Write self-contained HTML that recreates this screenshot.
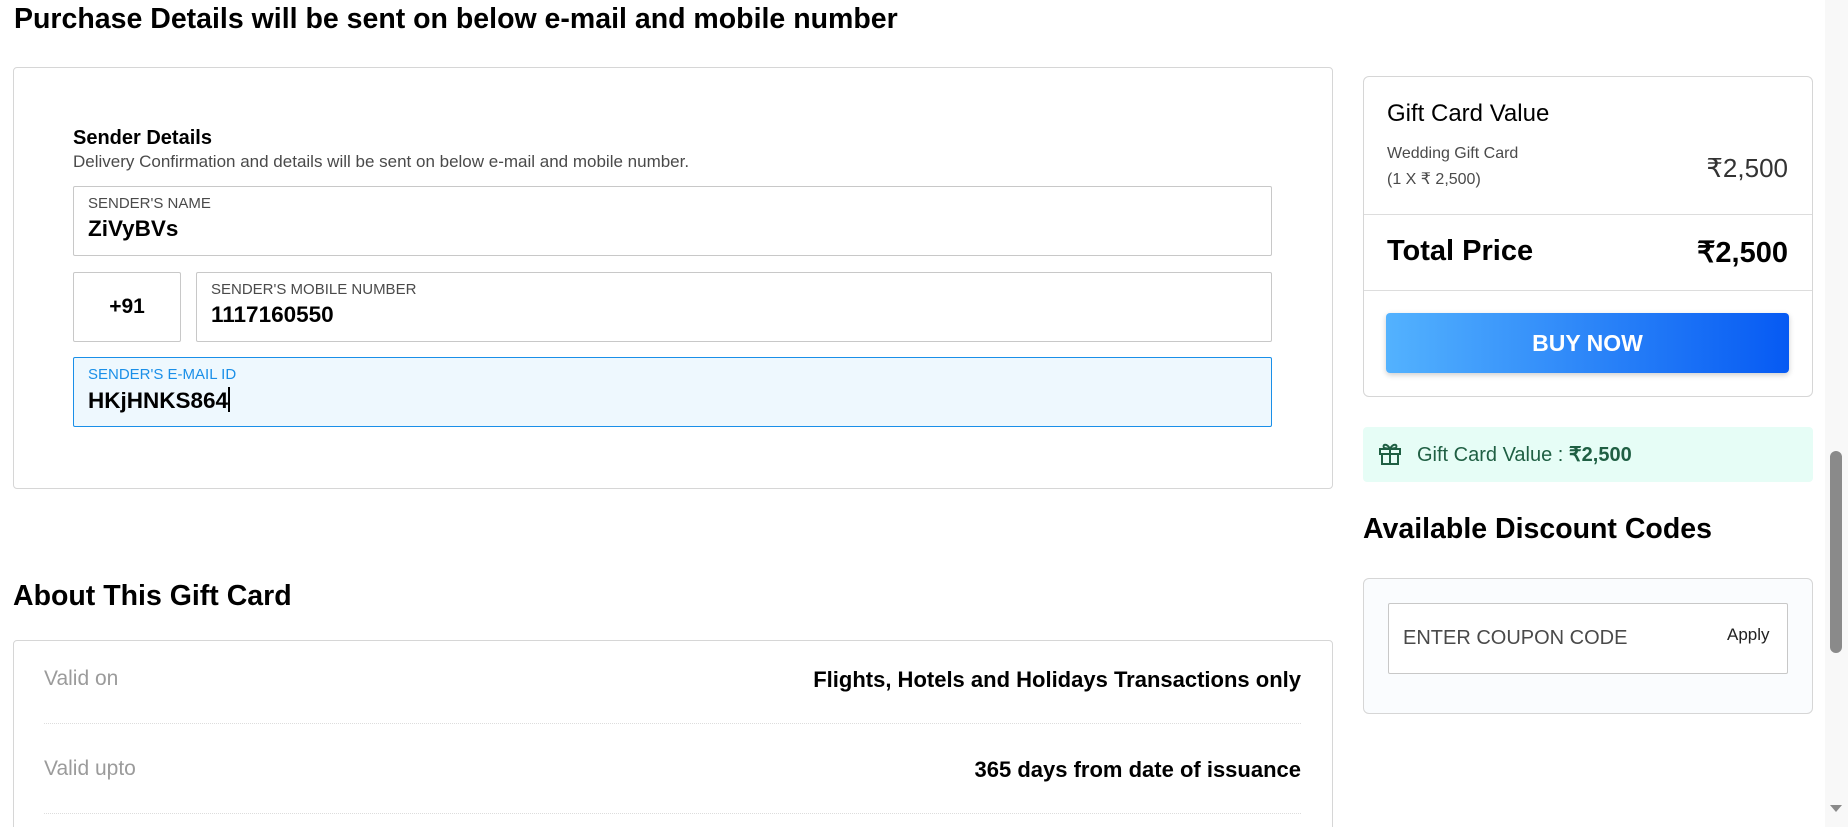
<!DOCTYPE html>
<html style="width:1848px;height:827px;overflow:hidden"><head><meta charset="utf-8"><style>
*{box-sizing:border-box;margin:0;padding:0}
body{width:1848px;height:827px;overflow:hidden;background:#fff;font-family:"Liberation Sans",sans-serif;position:relative;color:#000}
.a{position:absolute;white-space:nowrap}
.box{position:absolute;border:1px solid #d6d6d6;border-radius:4px;background:#fff}
.lbl{position:absolute;left:14px;top:8px;font-size:15px;color:#4a4a4a}
.val{position:absolute;left:14px;top:29px;font-size:22.5px;font-weight:bold;font-family:"Liberation Sans",Arial,sans-serif}
</style></head><body>
<div class="a" style="left:14px;top:3px;font-size:28.5px;font-weight:bold">Purchase Details will be sent on below e-mail and mobile number</div>

<div class="box" style="left:13px;top:67px;width:1320px;height:422px;border-radius:4px"></div>
<div class="a" style="left:73px;top:127px;font-size:20px;font-weight:bold">Sender Details</div>
<div class="a" style="left:73px;top:152px;font-size:17px;color:#4a4a4a">Delivery Confirmation and details will be sent on below e-mail and mobile number.</div>

<div class="box" style="left:73px;top:186px;width:1199px;height:70px;border-color:#c8c8c8;border-radius:2px"><div class="lbl">SENDER'S NAME</div><div class="val">ZiVyBVs</div></div>
<div class="box" style="left:73px;top:272px;width:108px;height:70px;border-color:#c8c8c8;border-radius:2px"><div class="a" style="left:0;width:106px;text-align:center;top:22px;font-size:21px;font-weight:bold">+91</div></div>
<div class="box" style="left:196px;top:272px;width:1076px;height:70px;border-color:#c8c8c8;border-radius:2px"><div class="lbl">SENDER'S MOBILE NUMBER</div><div class="val">1117160550</div></div>
<div class="box" style="left:73px;top:357px;width:1199px;height:70px;border-color:#1a8fe8;background:#eef8fe;border-radius:2px"><div class="lbl" style="color:#1a8fe8">SENDER'S E-MAIL ID</div><div class="val">HKjHNKS864<span style="display:inline-block;width:1.5px;height:25px;background:#000;vertical-align:-4px"></span></div></div>

<div class="a" style="left:13px;top:580px;font-size:28.5px;font-weight:bold">About This Gift Card</div>
<div class="box" style="left:13px;top:640px;width:1320px;height:200px"></div>
<div class="a" style="left:44px;top:667px;font-size:21px;color:#9b9b9b">Valid on</div>
<div class="a" style="right:547px;top:667px;font-size:22px;font-weight:bold">Flights, Hotels and Holidays Transactions only</div>
<div class="a" style="left:44px;top:723px;width:1257px;border-top:1px dotted #ddd"></div>
<div class="a" style="left:44px;top:757px;font-size:21px;color:#9b9b9b">Valid upto</div>
<div class="a" style="right:547px;top:757px;font-size:22px;font-weight:bold">365 days from date of issuance</div>
<div class="a" style="left:44px;top:813px;width:1257px;border-top:1px dotted #ddd"></div>

<div class="box" style="left:1363px;top:76px;width:450px;height:321px;border-radius:6px"></div>
<div class="a" style="left:1387px;top:100px;font-size:24px">Gift Card Value</div>
<div class="a" style="left:1387px;top:145px;font-size:16px;color:#4a4a4a">Wedding Gift Card</div>
<div class="a" style="left:1387px;top:169px;font-size:16px;color:#4a4a4a">(1 X ₹ 2,500)</div>
<div class="a" style="right:60px;top:153px;font-size:26px;color:#333">₹2,500</div>
<div class="a" style="left:1364px;top:214px;width:448px;border-top:1px solid #ddd"></div>
<div class="a" style="left:1387px;top:235px;font-size:29px;font-weight:bold">Total Price</div>
<div class="a" style="right:60px;top:235px;font-size:29px;font-weight:bold">₹2,500</div>
<div class="a" style="left:1364px;top:290px;width:448px;border-top:1px solid #ddd"></div>
<div class="a" style="left:1386px;top:313px;width:403px;height:60px;border-radius:4px;background:linear-gradient(90deg,#53b2fe,#065af3);box-shadow:0 2px 6px rgba(0,0,0,.2);color:#fff;font-size:23px;font-weight:bold;text-align:center;line-height:60px">BUY NOW</div>

<div class="a" style="left:1363px;top:427px;width:450px;height:55px;border-radius:4px;background:#e6fdf6"></div>
<svg class="a" style="left:1378px;top:441px" width="24" height="25" viewBox="0 0 24 25" fill="none" stroke="#1f5f43" stroke-width="2"><rect x="2" y="8" width="20" height="5"/><rect x="4" y="13" width="16" height="10"/><path d="M12 8v15M12 8C9 2 4 3 6 7l6 1M12 8c3-6 8-5 6-1l-6 1"/></svg>
<div class="a" style="left:1417px;top:442px;font-size:20px;color:#1f5f43">Gift Card Value : <b>₹2,500</b></div>

<div class="a" style="left:1363px;top:513px;font-size:28.5px;font-weight:bold">Available Discount Codes</div>
<div class="box" style="left:1363px;top:578px;width:450px;height:136px;background:#fafcfe;border-radius:6px"></div>
<div class="a" style="left:1388px;top:603px;width:400px;height:71px;border:1px solid #c8c8c8;background:#fff;border-radius:2px"></div>
<div class="a" style="left:1403px;top:627px;font-size:20px;color:#4a4a4a">ENTER COUPON CODE</div>
<div class="a" style="left:1727px;top:625px;font-size:17px;color:#222">Apply</div>

<div class="a" style="left:1825px;top:0;width:23px;height:827px;background:#f8f8f8"></div>
<div class="a" style="left:1830px;top:451px;width:12px;height:202px;border-radius:6px;background:#8a8a8a"></div>
<div class="a" style="left:1830px;top:805px;width:0;height:0;border-left:6px solid transparent;border-right:6px solid transparent;border-top:7px solid #8a8a8a"></div>
</body></html>
